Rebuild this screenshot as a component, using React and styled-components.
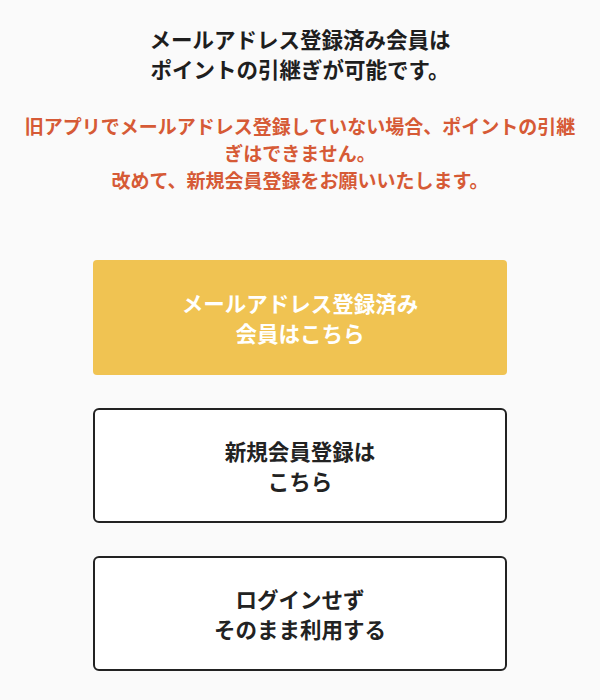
import React from 'react';
import styled, { createGlobalStyle } from 'styled-components';

const GlobalStyle = createGlobalStyle`
  html, body {
    margin: 0;
    padding: 0;
    background: #fafafa;
  }
  body {
    font-family: "Noto Sans CJK JP", "Noto Sans", sans-serif;
  }
`;

const Page = styled.div`
  display: flex;
  flex-direction: column;
  align-items: center;
  padding: 24px 20px 0;
`;

const Heading = styled.h1`
  margin: 0;
  font-size: 21.5px;
  line-height: 30px;
  font-weight: 700;
  color: #1e1e1e;
  text-align: center;
`;

const Notice = styled.p`
  margin: 28px 0 0;
  font-size: 19px;
  line-height: 27px;
  font-weight: 700;
  color: #d65a36;
  text-align: center;
`;

const Actions = styled.div`
  display: flex;
  flex-direction: column;
  gap: 33px;
  width: 414px;
  margin-top: 67px;
`;

const ActionButton = styled.button`
  display: flex;
  align-items: center;
  justify-content: center;
  height: 115px;
  padding: 0;
  font-family: inherit;
  font-size: 21.5px;
  line-height: 30px;
  font-weight: 700;
  text-align: center;
  cursor: pointer;
  border-radius: ${p => (p.$primary ? '4px' : '6px')};
  border: ${p => (p.$primary ? 'none' : '2px solid #222')};
  background: ${p => (p.$primary ? '#f0c352' : '#ffffff')};
  color: ${p => (p.$primary ? '#ffffff' : '#222222')};
`;

export default function App() {
  return (
    <>
      <GlobalStyle />
      <Page>
        <Heading>
          メールアドレス登録済み会員は<br />ポイントの引継ぎが可能です。
        </Heading>
        <Notice>
          旧アプリでメールアドレス登録していない場合、ポイントの引継ぎはできません。<br />
          改めて、新規会員登録をお願いいたします。
        </Notice>
        <Actions>
          <ActionButton $primary>
            メールアドレス登録済み<br />会員はこちら
          </ActionButton>
          <ActionButton>
            新規会員登録は<br />こちら
          </ActionButton>
          <ActionButton>
            ログインせず<br />そのまま利用する
          </ActionButton>
        </Actions>
      </Page>
    </>
  );
}
